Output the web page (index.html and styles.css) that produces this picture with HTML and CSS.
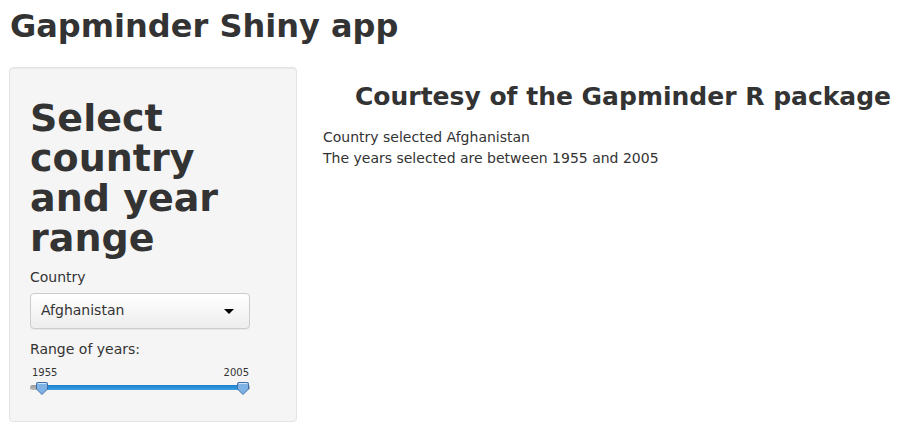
FILE: index.html
```html
<!DOCTYPE html>
<html>
<head>
<meta charset="utf-8">
<title>Gapminder Shiny app</title>
<link rel="stylesheet" href="styles.css">
</head>
<body>
<div class="page">
  <h2 class="title">Gapminder Shiny app</h2>
  <div class="row">
    <div class="sidebar">
      <div class="well">
        <h1 class="side-heading">Select country and year range</h1>
        <div class="field">
          <label class="label">Country</label>
          <div class="select">
            <span>Afghanistan</span>
            <span class="caret"></span>
          </div>
        </div>
        <div class="field">
          <label class="label">Range of years:</label>
          <div class="slider">
            <div class="slider-labels"><span>1955</span><span>2005</span></div>
            <div class="track">
              <div class="bar"></div>
              <svg class="handle handle-from" width="12" height="13" viewBox="0 0 12 13"><path d="M1.5 0.5 H10.5 Q11.5 0.5 11.5 1.5 V7 L6 12.5 L0.5 7 V1.5 Q0.5 0.5 1.5 0.5 Z" fill="#7fb3e6" stroke="#3e6fa8"/><path d="M2 1.5 H10" stroke="#cfe4f8" stroke-width="1"/></svg>
              <svg class="handle handle-to" width="12" height="13" viewBox="0 0 12 13"><path d="M1.5 0.5 H10.5 Q11.5 0.5 11.5 1.5 V7 L6 12.5 L0.5 7 V1.5 Q0.5 0.5 1.5 0.5 Z" fill="#7fb3e6" stroke="#3e6fa8"/><path d="M2 1.5 H10" stroke="#cfe4f8" stroke-width="1"/></svg>
            </div>
          </div>
        </div>
      </div>
    </div>
    <div class="main">
      <h3 class="main-heading">Courtesy of the Gapminder R package</h3>
      <div class="output">Country selected Afghanistan</div>
      <div class="output">The years selected are between 1955 and 2005</div>
    </div>
  </div>
</div>
</body>
</html>
```
FILE: styles.css
```css
* { box-sizing: border-box; }
body {
  margin: 0;
  font-family: "DejaVu Sans", sans-serif;
  font-size: 14px;
  line-height: 1.42857;
  color: #333;
  background: #fff;
}
.page { padding: 0 10px; }
.title {
  margin: 9px 0 23px;
  font-size: 32px;
  font-weight: bold;
  line-height: 1.1;
}
.row { display: flex; }
.sidebar { width: 288px; margin-left: -1px; flex: none; }
.well {
  background: #f5f5f5;
  border: 1px solid #e3e3e3;
  border-radius: 4px;
  box-shadow: inset 0 1px 1px rgba(0,0,0,0.05);
  padding: 19px 19px 19px 20px;
  height: 355px;
}
.side-heading {
  margin: 11px 0 10px;
  font-size: 38px;
  font-weight: bold;
  line-height: 40px;
}
.field { margin-bottom: 11px; width: 220px; }
.field:last-child { margin-bottom: 0; }
.label { display: block; margin-bottom: 5px; font-weight: normal; }
.select {
  display: flex;
  align-items: center;
  justify-content: space-between;
  height: 36px;
  padding: 0 15px 0 10px;
  border: 1px solid #ccc;
  border-radius: 4px;
  background: linear-gradient(#ffffff, #ededed);
  box-shadow: 0 1px 0 rgba(0,0,0,0.05);
}
.caret {
  width: 0; height: 0;
  border-left: 5px solid transparent;
  border-right: 5px solid transparent;
  border-top: 5px solid #000;
  margin-top: 1px;
}
.slider { position: relative; height: 26px; }
.slider-labels {
  display: flex;
  justify-content: space-between;
  font-size: 10px;
  line-height: 12px;
  padding: 2px 1px 0 2px;
}
.track {
  position: relative;
  margin-top: 6px;
  height: 5px;
  border-radius: 3px;
  background: linear-gradient(#9a9a9a, #bdbdbd);
}
.bar {
  position: absolute;
  left: 11px; right: 7px; top: 0; bottom: 0;
  background: linear-gradient(#1f7fcc, #3aa0e6);
}
.handle { position: absolute; top: -3px; }
.handle-from { left: 6px; }
.handle-to { right: 1px; }
.main { flex: 1; padding-left: 26px; }
.main-heading {
  margin: 16px 0 16px;
  padding-left: 32px;
  font-size: 25px;
  font-weight: bold;
  line-height: 1.1;
}
.output { line-height: 21px; }
```
